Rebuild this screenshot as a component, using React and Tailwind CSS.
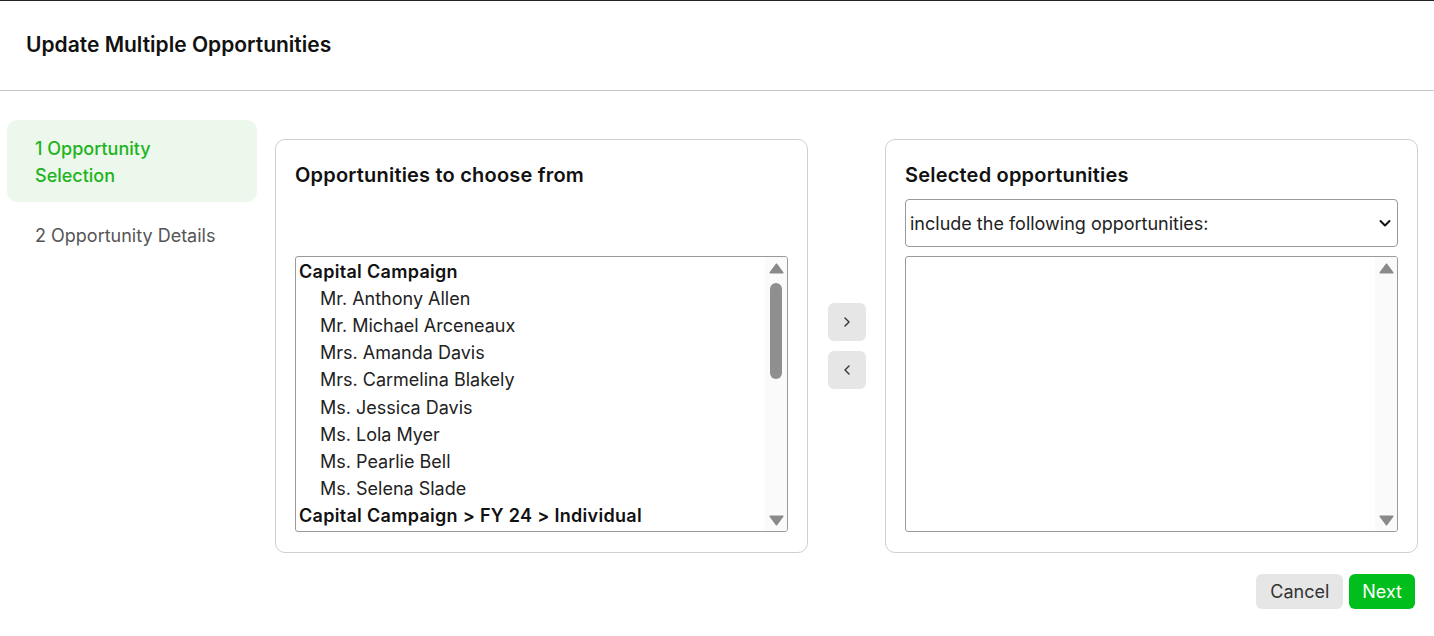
import React from "react";

const font = { fontFamily: "Inter, 'Noto Sans', sans-serif" };

const groups = [
  {
    label: "Capital Campaign",
    items: [
      "Mr. Anthony Allen",
      "Mr. Michael Arceneaux",
      "Mrs. Amanda Davis",
      "Mrs. Carmelina Blakely",
      "Ms. Jessica Davis",
      "Ms. Lola Myer",
      "Ms. Pearlie Bell",
      "Ms. Selena Slade",
    ],
  },
  { label: "Capital Campaign > FY 24 > Individual", items: [] },
];

function ScrollTrack({ thumb }) {
  return (
    <div className="relative w-[22px] shrink-0 bg-[#fafafa] flex flex-col items-center">
      <svg width="15" height="11" viewBox="0 0 15 11" className="mt-[6px]">
        <path d="M7.5 1.2 L13.8 9.8 L1.2 9.8 Z" fill="#8a8a8a" strokeLinejoin="round" stroke="#8a8a8a" strokeWidth="1.5" />
      </svg>
      {thumb && <div className="mt-[9px] w-[12px] h-[96px] rounded-full bg-[#8f8f8f]" />}
      <div className="flex-1" />
      <svg width="15" height="11" viewBox="0 0 15 11" className="mb-[5px]">
        <path d="M1.2 1.2 L13.8 1.2 L7.5 9.8 Z" fill="#8a8a8a" strokeLinejoin="round" stroke="#8a8a8a" strokeWidth="1.5" />
      </svg>
    </div>
  );
}

function Chevron({ dir }) {
  return (
    <svg width="10" height="12" viewBox="0 0 10 12" fill="none">
      <path
        d={dir === "right" ? "M3 2 L7 6 L3 10" : "M7 2 L3 6 L7 10"}
        stroke="#333"
        strokeWidth="1.4"
        strokeLinecap="round"
        strokeLinejoin="round"
      />
    </svg>
  );
}

export default function App() {
  return (
    <div className="w-[1434px] h-[636px] bg-white border-t border-[#222] text-[#111]" style={font}>
      <header className="h-[90px] border-b border-[#c8c8c8] flex items-center pl-[26px]">
        <h1 className="text-[21px] font-semibold -mt-[1px]">Update Multiple Opportunities</h1>
      </header>

      <div className="flex pt-[29px]">
        {/* step list */}
        <nav className="w-[250px] ml-[7px] mr-[18px] flex flex-col">
          <div className="h-[82px] rounded-[10px] bg-[#edf8ec] pl-[28px] pt-[15px] text-[18px] leading-[27px] font-medium text-[#1db41d]">
            1 Opportunity
            <br />
            Selection
          </div>
          <div className="pl-[28px] pt-[20px] text-[18px] leading-[27px] text-[#555]">2 Opportunity Details</div>
        </nav>

        {/* available */}
        <section className="mt-[19px] w-[533px] h-[414px] rounded-[10px] border border-[#cfcfcf] px-[19px] pt-[21px]">
          <h2 className="text-[20px] leading-[28px] font-semibold tracking-[0.2px]">Opportunities to choose from</h2>
          <div className="mt-[67px] h-[276px] border border-[#9a9a9a] rounded-[3px] flex overflow-hidden">
            <div className="flex-1 pt-[0.5px] text-[18px] leading-[27.2px]">
              {groups.map((g) => (
                <div key={g.label}>
                  <div className="pl-[3px] font-semibold tracking-[0.3px]">{g.label}</div>
                  {g.items.map((i) => (
                    <div key={i} className="pl-[24px] text-[#222]">
                      {i}
                    </div>
                  ))}
                </div>
              ))}
            </div>
            <ScrollTrack thumb />
          </div>
        </section>

        {/* move buttons */}
        <div className="w-[77px] flex flex-col items-center pt-[183px] gap-[10px]">
          <button className="w-[38px] h-[38px] rounded-[6px] bg-[#e6e6e6] flex items-center justify-center">
            <Chevron dir="right" />
          </button>
          <button className="w-[38px] h-[38px] rounded-[6px] bg-[#e6e6e6] flex items-center justify-center">
            <Chevron dir="left" />
          </button>
        </div>

        {/* selected */}
        <section className="mt-[19px] w-[533px] h-[414px] rounded-[10px] border border-[#cfcfcf] px-[19px] pt-[21px]">
          <h2 className="text-[20px] leading-[28px] font-semibold tracking-[0.2px]">Selected opportunities</h2>
          <div className="mt-[10px] h-[48px] rounded-[4px] border border-[#9a9a9a] flex items-center justify-between pl-[4px] pr-[5px] text-[18px] text-[#222]">
            <span>include the following opportunities:</span>
            <svg width="14" height="10" viewBox="0 0 14 10" fill="none">
              <path d="M2.5 3 L7 7.5 L11.5 3" stroke="#111" strokeWidth="2" strokeLinecap="round" strokeLinejoin="round" />
            </svg>
          </div>
          <div className="mt-[9px] h-[276px] border border-[#9a9a9a] rounded-[3px] flex overflow-hidden">
            <div className="flex-1" />
            <ScrollTrack />
          </div>
        </section>
      </div>

      <div className="flex justify-end gap-[6px] pr-[19px] pt-[21px]">
        <button className="h-[35px] px-[14px] rounded-[6px] bg-[#e6e6e6] text-[18px] text-[#333]">Cancel</button>
        <button className="h-[35px] px-[13px] rounded-[6px] bg-[#00bf1c] text-[18px] text-white">Next</button>
      </div>
    </div>
  );
}
